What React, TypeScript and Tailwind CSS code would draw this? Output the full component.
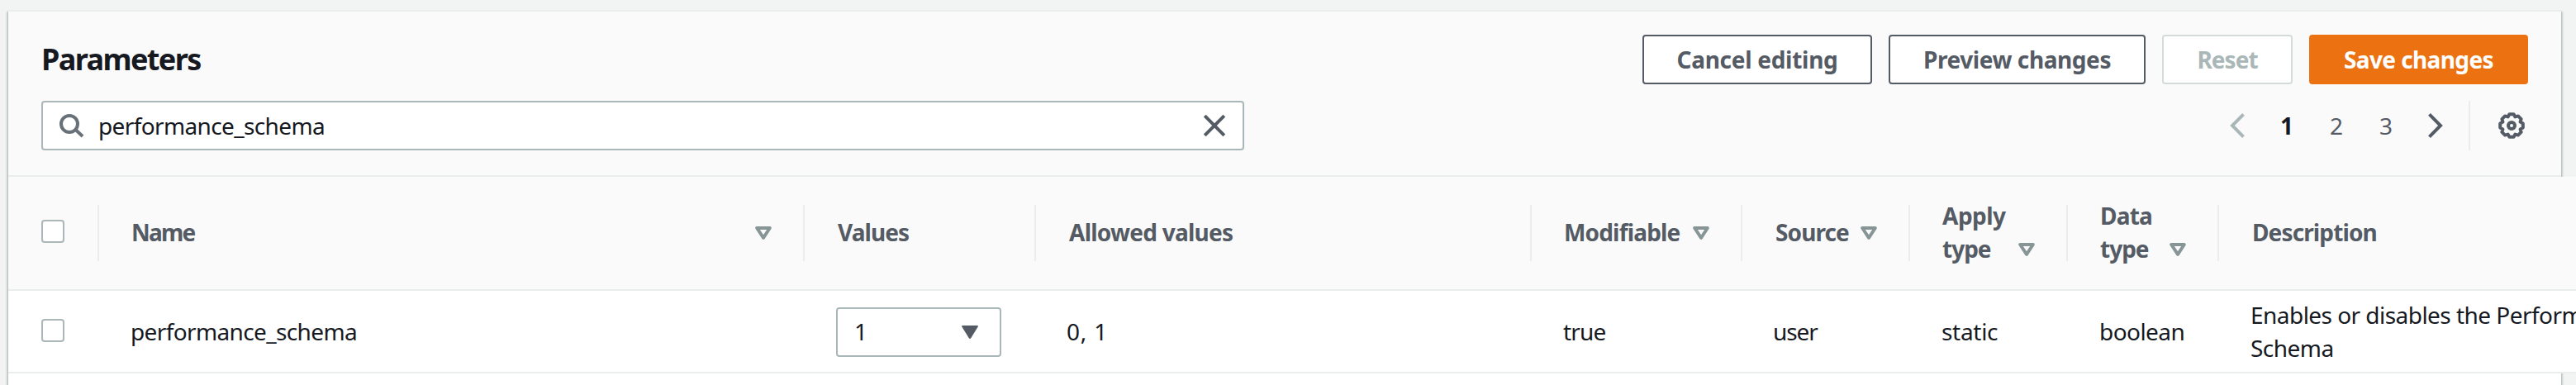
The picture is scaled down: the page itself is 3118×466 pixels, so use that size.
import type { ReactNode } from "react";

function SortIcon({ className = "" }: { className?: string }) {
  return (
    <svg className={`h-4 w-5 shrink-0 ${className}`} viewBox="0 0 20 16" fill="none" stroke="#879596" strokeWidth="4" strokeLinejoin="round">
      <path d="M2.2 2h15.6L10 13.8z" />
    </svg>
  );
}

function Checkbox() {
  return <span role="checkbox" aria-checked="false" className="block size-7 shrink-0 rounded-[4px] border-2 border-[#aab7b8] bg-white" />;
}

function Button({ className, children }: { className: string; children: ReactNode }) {
  return (
    <button className={`flex h-[60px] items-center justify-center rounded-[4px] border-2 pb-px text-[28px] leading-10 font-bold whitespace-nowrap ${className}`}>
      {children}
    </button>
  );
}

function HeaderCell({ className, last = false, children }: { className: string; last?: boolean; children: ReactNode }) {
  return (
    <div className={`flex shrink-0 items-center ${className}`}>
      <div className="flex flex-1 items-center pb-0.5">{children}</div>
      {!last && <span className="h-[68px] w-0.5 shrink-0 bg-[#eaeded]" />}
    </div>
  );
}

export default function App() {
  return (
    <div className="h-[466px] w-[3118px] overflow-hidden bg-[#f2f3f3] pt-3 pl-[10px] font-['Noto_Sans','Open_Sans',sans-serif] text-[28px] leading-10 text-[#16191f]">
      <div className="h-[480px] w-[3090px] bg-white shadow-[0_2px_2px_0_rgba(0,28,36,0.3),2px_2px_2px_0_rgba(0,28,36,0.15),-2px_2px_2px_0_rgba(0,28,36,0.15)]">
        <header className="h-[202px] border-y-2 border-[#eaeded] bg-[#fafafa] px-10">
          <div className="flex h-[108px] items-start justify-between pt-7">
            <h2 className="mt-2 text-[36px] leading-[44px] font-bold tracking-[-1.6px]">Parameters</h2>
            <div className="flex gap-5">
              <Button className="w-[278px] border-[#545b64] bg-white tracking-[-0.28px] text-[#545b64]">Cancel editing</Button>
              <Button className="w-[311px] border-[#545b64] bg-white tracking-[-0.42px] text-[#545b64]">Preview changes</Button>
              <Button className="w-[158px] border-[#d5dbdb] bg-white tracking-[-0.97px] text-[#aab7b8]">Reset</Button>
              <Button className="w-[265px] border-[#ec7211] bg-[#ec7211] tracking-[-0.6px] text-white">Save changes</Button>
            </div>
          </div>
          <div className="flex items-center justify-between">
            <div className="flex h-[60px] w-[1456px] items-center rounded-[4px] border-2 border-[#aab7b8] bg-white pr-[19px] pl-5">
              <svg className="size-[30px]" viewBox="0 0 30 30" fill="none" stroke="#687078" strokeWidth="4">
                <circle cx="12" cy="13" r="10" />
                <path d="M19.500 20l8.500 8" />
              </svg>
              <span className="ml-[17px] flex-1 tracking-[-0.63px]">performance_schema</span>
              <svg className="size-[30px]" viewBox="0 0 30 30" fill="none" stroke="#545b64" strokeWidth="4">
                <path d="M3.200 3.200l23.600 23.600M26.800 3.200L3.200 26.800" />
              </svg>
            </div>
            <nav className="flex h-[60px] items-center text-[#545b64]">
              <svg className="h-9 w-[18px]" viewBox="0 0 18 36" fill="none" stroke="#aab7b8" strokeWidth="4">
                <path d="M16.500 4.300L3 18l13.500 13.700" />
              </svg>
              <span className="ml-[41px] w-5 text-center font-bold text-[#16191f]">1</span>
              <span className="ml-10 w-5 text-center">2</span>
              <span className="ml-10 w-5 text-center">3</span>
              <svg className="ml-[41px] h-9 w-[18px]" viewBox="0 0 18 36" fill="none" stroke="#545b64" strokeWidth="4">
                <path d="M1.500 4.300L15 18 1.500 31.700" />
              </svg>
              <span className="mr-[34px] ml-[31px] h-[60px] w-0.5 bg-[#eaeded]" />
              <svg className="mr-1 size-8" viewBox="0 0 32 32" fill="none" stroke="#545b64" strokeWidth="4" strokeLinejoin="round">
                <path d="M13.400 2.200h5.200l1.800 3.200 3.500-1 3.700 3.700-1 3.500 3.200 1.800v5.200l-3.200 1.800 1 3.500-3.700 3.700-3.500-1-1.800 3.200h-5.200l-1.800-3.200-3.500 1-3.700-3.700 1-3.500-3.200-1.800v-5.200l3.200-1.800-1-3.500 3.700-3.700 3.500 1z" />
                <circle cx="16" cy="16" r="4" />
              </svg>
            </nav>
          </div>
        </header>
        <div className="w-[3400px]">
          <div className="flex h-[138px] border-b-2 border-[#eaeded] bg-[#fafafa] font-bold text-[#545b64]">
            <HeaderCell className="w-[110px] pl-10">
              <span className="-mt-0.5"><Checkbox /></span>
            </HeaderCell>
            <HeaderCell className="w-[854px] pl-[39px]">
              <span className="flex-1 tracking-[-1.8px]">Name</span>
              <SortIcon className="mr-[38px] mt-0.5" />
            </HeaderCell>
            <HeaderCell className="w-[280px] pl-10"><span className="tracking-[-0.95px]">Values</span></HeaderCell>
            <HeaderCell className="w-[600px] pl-10"><span className="tracking-[-0.75px]">Allowed values</span></HeaderCell>
            <HeaderCell className="w-[255px] pl-[39px]">
              <span className="flex-1 tracking-[-0.83px]">Modifiable</span>
              <SortIcon className="mt-0.5 mr-[38px]" />
            </HeaderCell>
            <HeaderCell className="w-[203px] pl-10">
              <span className="flex-1 tracking-[-0.9px]">Source</span>
              <SortIcon className="mt-0.5 mr-[38px]" />
            </HeaderCell>
            <HeaderCell className="w-[191px] pl-[39px]">
              <span className="flex-1"><span className="tracking-[-0.5px]">Apply</span><br /><span className="tracking-[-1px]">type</span></span>
              <SortIcon className="mt-[42px] mr-[38px]" />
            </HeaderCell>
            <HeaderCell className="w-[183px] pl-[39px]">
              <span className="flex-1"><span className="tracking-[-0.8px]">Data</span><br /><span className="tracking-[-1px]">type</span></span>
              <SortIcon className="mt-[42px] mr-[38px]" />
            </HeaderCell>
            <HeaderCell className="w-[724px] pl-10" last><span className="tracking-[-0.88px]">Description</span></HeaderCell>
          </div>
          <div className="flex h-[100px] items-center border-b-2 border-[#eaeded] bg-white">
            <div className="w-[148px] shrink-0 pb-0.5 pl-10"><Checkbox /></div>
            <div className="w-[854px] shrink-0 tracking-[-0.63px]">performance_schema</div>
            <div className="w-[279px] shrink-0 pt-0.5">
              <div className="flex h-[60px] w-[200px] items-center rounded-[4px] border-2 border-[#aab7b8] bg-white pr-[26px] pl-5">
                <span className="flex-1 pb-0.5">1</span>
                <svg className="h-4 w-5" viewBox="0 0 20 16"><path d="M1.200 0h17.600q1.600 0 .9 1.600L11.200 15.200q-1.200 1.600-2.400 0L.3 1.600Q-.4 0 1.200 0z" fill="#545b64" /></svg>
              </div>
            </div>
            <div className="w-[601px] shrink-0 tracking-[0.8px]">0, 1</div>
            <div className="w-[254px] shrink-0 tracking-[-0.8px]">true</div>
            <div className="w-[204px] shrink-0 tracking-[-1.1px]">user</div>
            <div className="w-[191px] shrink-0 tracking-[-0.3px]">static</div>
            <div className="w-[183px] shrink-0 tracking-[-0.57px]">boolean</div>
            <div className="shrink-0 whitespace-nowrap tracking-[-0.54px]">Enables or disables the Performance<br />Schema</div>
          </div>
        </div>
      </div>
    </div>
  );
}
